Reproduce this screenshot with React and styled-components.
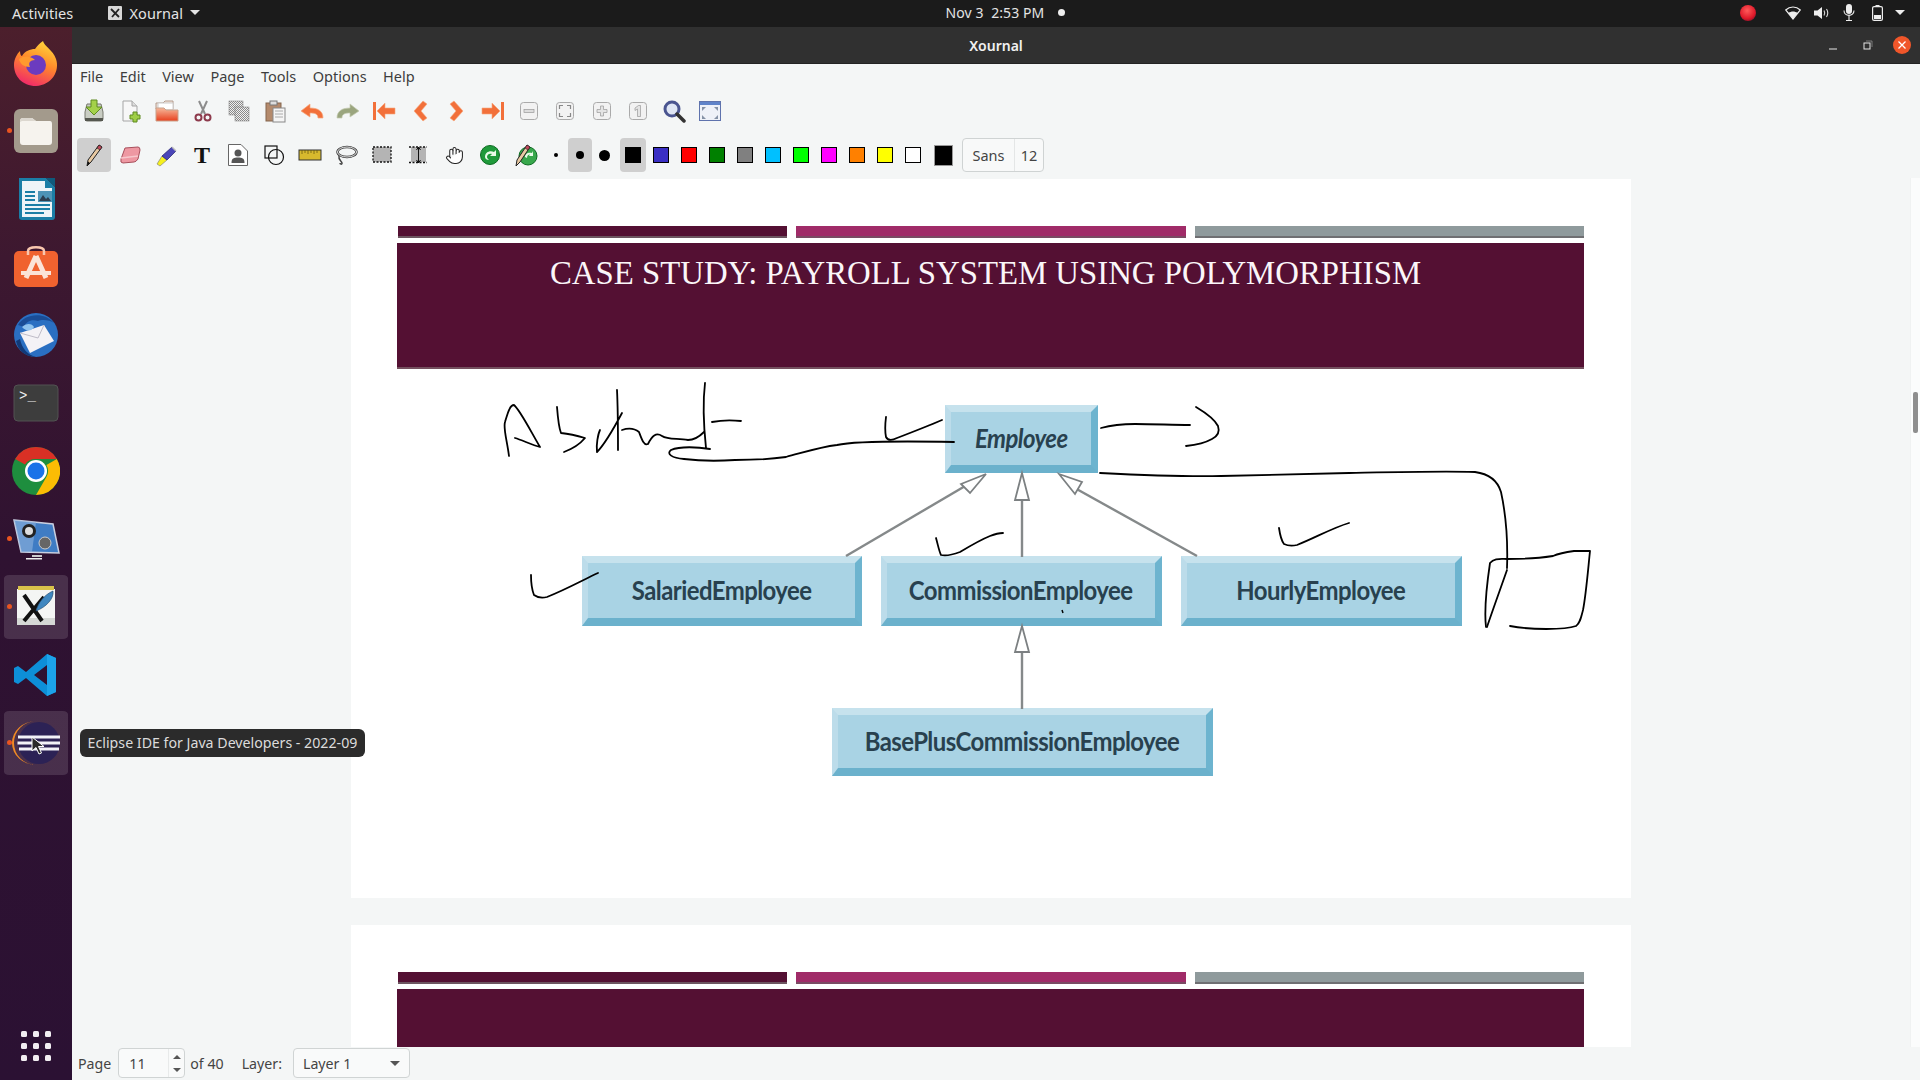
import React from 'react';
import styled, {createGlobalStyle} from 'styled-components';
import {Hand} from 'lucide-react';

const UI_FONT = `"Noto Sans", "Open Sans", sans-serif`;

const GlobalStyle = createGlobalStyle`
    html, body {
        margin: 0;
        padding: 0;
        width: 1920px;
        height: 1080px;
        overflow: hidden;
        background: #f4f6f6;
        font-family: ${UI_FONT};
    }
    * { box-sizing: border-box; }
    svg { display: block; }
`;

const Screen = styled.div`
    display: flex;
    flex-direction: column;
    width: 1920px;
    height: 1080px;
    position: relative;
`;

/* top gnome panel */
const Panel = styled.header`
    display: grid;
    grid-template-columns: 1fr auto 1fr;
    align-items: center;
    flex: 0 0 27px;
    padding-bottom: 2px;
    background: #1b1b1b;
    color: #e4e4e4;
    font-size: 14.5px;
    letter-spacing: 0.1px;
`;

const PanelLeft = styled.div`
    display: flex;
    align-items: center;
    padding-left: 12px;
`;

const AppMenu = styled.div`
    display: flex;
    align-items: center;
    gap: 7px;
    margin-left: 35px;
`;

const Clock = styled.div`
    display: flex;
    align-items: center;
    gap: 14px;
    padding-left: 91px;
    font-size: 14px;
    white-space: pre;
`;

const ClockDot = styled.span`
    width: 7px;
    height: 7px;
    border-radius: 50%;
    background: #eee;
`;

const PanelRight = styled.div`
    display: flex;
    align-items: center;
    justify-content: flex-end;
    padding-right: 12px;
`;

const Tray = styled.div`
    display: flex;
    align-items: center;
    justify-content: center;
    width: ${props => props.w}px;
`;

const Caret = styled.span`
    display: block;
    width: 0;
    height: 0;
    border-left: ${props => props.size}px solid transparent;
    border-right: ${props => props.size}px solid transparent;
    border-top: ${props => props.size}px solid ${props => props.color};
`;

const Body = styled.div`
    display: flex;
    flex: 1;
    min-height: 0;
`;

/* ubuntu dock */
const Dock = styled.nav`
    display: flex;
    flex-direction: column;
    flex: 0 0 72px;
    background: linear-gradient(180deg, #4c1f2c 0%, #3d1830 22%, #2f1231 50%, #2b1133 100%);
    padding-top: 2px;
`;

const DockItem = styled.div`
    position: relative;
    display: flex;
    align-items: center;
    justify-content: center;
    flex: 0 0 68px;
    margin: 0 4px;
    border-radius: 5px;
    background: ${props => (props.active ? 'rgba(255, 255, 255, 0.13)' : 'transparent')};
    height: 64px;
    border-top: 2px solid transparent;
    border-bottom: 2px solid transparent;
    background-clip: padding-box;
`;

const RunDot = styled.span`
    position: absolute;
    left: 3px;
    top: 50%;
    margin-top: -3px;
    width: 5px;
    height: 5px;
    border-radius: 50%;
    background: #e95420;
`;

const DockGrid = styled.div`
    display: grid;
    grid-template-columns: repeat(3, 6px);
    gap: 6px;
    justify-content: center;
    margin-top: auto;
    padding-bottom: 19px;
`;

const DockGridDot = styled.span`
    width: 6px;
    height: 6px;
    border-radius: 1.5px;
    background: #f2eef2;
`;

const Tooltip = styled.div`
    position: absolute;
    left: 80px;
    top: 729px;
    height: 28px;
    width: 285px;
    display: flex;
    align-items: center;
    justify-content: center;
    padding-bottom: 1px;
    background: #2b2b2b;
    color: #dcdcdc;
    border-radius: 6px;
    font-size: 14.2px;
    white-space: nowrap;
    z-index: 5;
`;

const Window = styled.main`
    display: flex;
    flex-direction: column;
    flex: 1;
    min-width: 0;
`;

const TitleBar = styled.div`
    display: grid;
    grid-template-columns: 1fr auto 1fr;
    align-items: center;
    flex: 0 0 37px;
    background: #303030;
    color: #f0f0f0;
    font-size: 14px;
    font-weight: 600;
    border-bottom: 1px solid #232323;
`;

const WindowTitle = styled.span`
    grid-column: 2;
`;

const WindowButtons = styled.div`
    grid-column: 3;
    display: flex;
    align-items: center;
    justify-content: flex-end;
    gap: 19px;
    padding-right: 9px;
`;

const WinButton = styled.span`
    display: flex;
    align-items: center;
    justify-content: center;
    width: ${props => (props.close ? 18 : 16)}px;
    height: 18px;
    margin-left: ${props => (props.close ? -2 : 0)}px;
    border-radius: 50%;
    background: ${props => (props.close ? '#f0562a' : 'transparent')};
`;

const MenuBar = styled.div`
    display: flex;
    align-items: center;
    gap: 16.5px;
    flex: 0 0 26px;
    padding: 0 0 2px 8px;
    background: #f4f6f6;
    color: #3d3d3d;
    font-size: 14.5px;
`;

const ToolRow = styled.div`
    display: flex;
    align-items: center;
    flex: 0 0 ${props => props.h}px;
    padding: 2px 0 0 4px;
    background: #f4f6f6;
`;

const Tool = styled.div`
    display: flex;
    align-items: center;
    justify-content: center;
    flex: 0 0 36.25px;
    height: 34px;
`;

const ActiveTool = styled(Tool)`
    flex: 0 0 34px;
    margin: 0 1px;
    border-radius: 4px;
    background: ${props => (props.active ? '#cfcfcf' : 'transparent')};
`;

const SerifT = styled.span`
    font-family: "Liberation Serif", serif;
    font-weight: 700;
    font-size: 24px;
    line-height: 1;
    color: #111;
`;

const DotTool = styled.div`
    display: flex;
    align-items: center;
    justify-content: center;
    flex: 0 0 24px;
    height: 34px;
    border-radius: 4px;
    background: ${props => (props.active ? '#cfcfcf' : 'transparent')};
`;

const Dot = styled.span`
    width: ${props => props.size}px;
    height: ${props => props.size}px;
    border-radius: 50%;
    background: #000;
`;

const SwatchTool = styled.div`
    display: flex;
    align-items: center;
    justify-content: center;
    flex: 0 0 ${props => (props.active ? 26 : 28)}px;
    height: 34px;
    margin: 0 ${props => (props.active ? 1 : 0)}px 0 ${props => (props.active ? 4 : 0)}px;
    border-radius: 4px;
    background: ${props => (props.active ? '#cfcfcf' : 'transparent')};
`;

const Swatch = styled.span`
    width: 16px;
    height: 16px;
    border: 1px solid #000;
    background: ${props => props.color};
`;

const BigSwatch = styled.span`
    width: 19px;
    height: 21px;
    margin-left: 7px;
    margin-right: 9px;
    background: #000;
    border: 1px solid #999;
`;

const FontButton = styled.div`
    display: flex;
    align-items: center;
    width: 82px;
    height: 34px;
    border: 1px solid #cfd3d3;
    border-radius: 4px;
    background: #f8f9f9;
    color: #444;
    font-size: 14.5px;
`;

const FontName = styled.span`
    flex: 0 0 52px;
    text-align: center;
    border-right: 1px solid #e4e6e6;
    line-height: 32px;
`;

const FontSize = styled.span`
    flex: 1;
    text-align: center;
`;

/* document canvas */
const CanvasRow = styled.div`
    display: flex;
    flex: 1;
    min-height: 0;
    background: #f4f6f6;
`;

const Canvas = styled.div`
    display: flex;
    flex-direction: column;
    align-items: center;
    gap: 27px;
    flex: 1;
    padding-top: 1px;
    overflow: hidden;
`;

const ScrollStrip = styled.div`
    flex: 0 0 10px;
    background: #fbfcfc;
    border-left: 1px solid #f0f2f2;
    padding: 214px 0 0 2px;
`;

const ScrollThumb = styled.div`
    width: 5px;
    height: 41px;
    background: #8e8e8e;
    border-radius: 2px;
`;

const Page = styled.section`
    position: relative;
    flex: 0 0 719px;
    width: 1280px;
    background: #fff;
    padding: 47px 47px 0 46px;
`;

const Stripes = styled.div`
    display: flex;
    gap: 9px;
    padding-left: 1px;
`;

const Stripe = styled.div`
    flex: 1;
    height: 12px;
    background: ${props => props.color};
    border-bottom: 2px solid ${props => props.edge};
`;

const SlideHeader = styled.div`
    height: 126px;
    margin-top: 5px;
    padding: 4px 10px 0 0;
    background: #541033;
    border-bottom: 2px solid #75505f;
    color: #fbf6f9;
    font-family: "Liberation Serif", serif;
    font-size: 32.8px;
    line-height: 52px;
    text-align: center;
`;

const Node = styled.div`
    position: absolute;
    left: ${props => props.x}px;
    top: ${props => props.y}px;
    width: ${props => props.w}px;
    height: ${props => props.h}px;
    display: flex;
    align-items: center;
    justify-content: center;
    padding-bottom: 1px;
    background: #a9d3e4;
    border-style: solid;
    border-width: 7px 7px 8px 6px;
    border-color: #c6e2ed #6db4cf #6bb1cc #bcdcea;
    color: #28414f;
    font-family: Lato, "Liberation Sans", sans-serif;
    font-weight: 700;
    font-style: ${props => (props.italic ? 'italic' : 'normal')};
    font-size: 26px;
    letter-spacing: -0.6px;
    white-space: nowrap;
`;

const NodeLabel = styled.span`
    display: block;
    transform: scaleX(0.92);
`;

const Ink = styled.svg`
    position: absolute;
    left: 0;
    top: 0;
    width: 1280px;
    height: 719px;
    overflow: visible;
    pointer-events: none;
`;

const StatusBar = styled.footer`
    display: flex;
    align-items: center;
    flex: 0 0 33px;
    padding: 0 0 1px 6px;
    background: #f4f6f6;
    color: #444;
    font-size: 14.2px;
`;

const SpinBox = styled.div`
    display: flex;
    align-items: center;
    width: 67px;
    height: 30px;
    margin: 0 5px 0 7px;
    border: 1px solid #d0d4d4;
    border-radius: 4px;
    background: #f9fafa;
    padding-left: 10px;
`;

const SpinValue = styled.span`
    flex: 1;
`;

const SpinArrows = styled.div`
    display: flex;
    flex-direction: column;
    align-items: center;
    justify-content: center;
    gap: 9px;
    width: 16px;
    height: 100%;
    border-left: 1px solid #e8eaea;
`;

const ArrowUp = styled.span`
    width: 0;
    height: 0;
    border-left: 4px solid transparent;
    border-right: 4px solid transparent;
    border-bottom: 4px solid #555;
`;

const LayerLabel = styled.span`
    margin: 0 11px 0 18px;
`;

const LayerSelect = styled.div`
    display: flex;
    align-items: center;
    justify-content: space-between;
    width: 117px;
    height: 30px;
    padding: 0 9px;
    border: 1px solid #d0d4d4;
    border-radius: 4px;
    background: #f9fafa;
`;

const PointerMark = styled.svg`
    position: absolute;
    left: 27px;
    top: 25px;
`;

/* --- small drawings --- */

const S = ({children, size = 24, box = 24}) => (
    <svg width={size} height={size} viewBox={`0 0 ${box} ${box}`}>{children}</svg>
);

const Checker = () => (
    <pattern id="chk" width="2" height="2" patternUnits="userSpaceOnUse">
        <rect width="2" height="2" fill="#f0f0f0"/>
        <rect width="1" height="1" fill="#8a8a8a"/>
        <rect x="1" y="1" width="1" height="1" fill="#8a8a8a"/>
    </pattern>
);

const toolbarIcons = {
    save: <S><path d="M3 13 L5 5 H19 L21 13 V20 Q21 22 19 22 H5 Q3 22 3 20Z" fill="#c9cdc3" stroke="#77796f"/><rect x="3" y="19" width="18" height="3" fill="#55574f"/><path d="M9 1 H15 V8 H20 L12 16 L4 8 H9Z" fill="#a4d14a" stroke="#5f8a20"/></S>,
    file: <S><path d="M5 2 H14 L19 7 V22 H5Z" fill="#f7f7f7" stroke="#a5a5a5"/><path d="M14 2 V7 H19" fill="#ddd" stroke="#a5a5a5"/><path d="M15 13 H19 V16 H22 V20 H19 V23 H15 V20 H12 V16 H15Z" fill="#9fce45" stroke="#5f8a20"/></S>,
    open: <S><defs><linearGradient id="folder" x1="0" y1="0" x2="0" y2="1"><stop offset="0" stopColor="#f6b89a"/><stop offset="1" stopColor="#e8401e"/></linearGradient></defs><path d="M1 4 H8 L10 2 H18 V10 H1Z" fill="#f2e6dc" stroke="#b39a8c"/><rect x="3" y="4" width="15" height="7" fill="#fff" stroke="#ccc"/><path d="M1 9 H9 L11 11 H23 V22 H1Z" fill="url(#folder)" stroke="#c9a18a"/></S>,
    cut: <S><path d="M8 2 L14 15 M16 2 L10 15" stroke="#8c8c8c" strokeWidth="2"/><circle cx="7.5" cy="18.5" r="3" fill="none" stroke="#8d3a4c" strokeWidth="2"/><circle cx="16.5" cy="18.5" r="3" fill="none" stroke="#8d3a4c" strokeWidth="2"/></S>,
    copy: <S><defs><Checker/></defs><rect x="2" y="2" width="14" height="14" fill="url(#chk)" stroke="#777" strokeWidth=".5"/><rect x="8" y="8" width="14" height="14" fill="url(#chk)" stroke="#777" strokeWidth=".5"/></S>,
    paste: <S><rect x="3" y="4" width="15" height="18" fill="#b48a6c" stroke="#83644c"/><rect x="7" y="2" width="7" height="4" fill="#ddd" stroke="#777"/><rect x="10" y="9" width="12" height="14" fill="#f5f5f5" stroke="#888"/><path d="M12 12 H20 M12 15 H20 M12 18 H20" stroke="#aaa"/></S>,
    undo: <S><path d="M1 12 L10 5 V9 C18 9 23 12 23 19 L18 19 C18 15 15 14 10 14 V18Z" fill="#f2703a" stroke="#f7a77c" strokeWidth=".7" strokeLinejoin="round"/></S>,
    redo: <S><path d="M23 12 L14 5 V9 C6 9 1 12 1 19 L6 19 C6 15 9 14 14 14 V18Z" fill="#9aa57e" stroke="#c3cab0" strokeWidth=".7" strokeLinejoin="round"/></S>,
    first: <S><rect x="1" y="3" width="3" height="18" fill="#f2703a"/><path d="M5 12 L13 4 V9 H23 V15 H13 V20Z" fill="#f2703a" stroke="#f7a77c" strokeWidth=".6"/></S>,
    prev: <S><path d="M15 2 L6 12 L15 22 L19 19 L13 12 L19 5Z" fill="#f2703a" stroke="#f7a77c" strokeWidth=".6" strokeLinejoin="round"/></S>,
    next: <S><path d="M9 2 L18 12 L9 22 L5 19 L11 12 L5 5Z" fill="#f2703a" stroke="#f7a77c" strokeWidth=".6" strokeLinejoin="round"/></S>,
    last: <S><rect x="20" y="3" width="3" height="18" fill="#f2703a"/><path d="M19 12 L11 4 V9 H1 V15 H11 V20Z" fill="#f2703a" stroke="#f7a77c" strokeWidth=".6"/></S>,
    zoomOut: <S box={20} size={20}><rect x="1.5" y="1.5" width="17" height="17" rx="3" fill="#f2f2f2" stroke="#aaa"/><rect x="5" y="8.5" width="10" height="3" fill="#ddd" stroke="#999" strokeWidth=".7"/></S>,
    zoomFit: <S box={20} size={20}><rect x="1.5" y="1.5" width="17" height="17" rx="3" fill="#f2f2f2" stroke="#aaa"/><path d="M4.5 8 V4.5 H8 M12 4.5 H15.5 V8 M15.5 12 V15.5 H12 M8 15.5 H4.5 V12" fill="none" stroke="#888" strokeWidth="1.2"/></S>,
    zoomIn: <S box={20} size={20}><rect x="1.5" y="1.5" width="17" height="17" rx="3" fill="#f2f2f2" stroke="#aaa"/><path d="M8.5 5 H11.5 V8.5 H15 V11.5 H11.5 V15 H8.5 V11.5 H5 V8.5 H8.5Z" fill="#e4e4e4" stroke="#999" strokeWidth=".7"/></S>,
    zoomOne: <S box={20} size={20}><rect x="1.5" y="1.5" width="17" height="17" rx="3" fill="#f2f2f2" stroke="#aaa"/><path d="M7 7 L10.5 4.5 H12.5 V15.5 H9.5 V8 L7 9.5Z" fill="#e4e4e4" stroke="#999" strokeWidth=".7"/></S>,
    find: <S><circle cx="10" cy="10" r="7" fill="#dfe6f5" stroke="#4a5590" strokeWidth="3"/><path d="M15 15 L22 22" stroke="#333" strokeWidth="3.5" strokeLinecap="round"/></S>,
    fullscreen: <S><rect x="1.5" y="2.5" width="21" height="19" fill="#eef1f8" stroke="#5f73ad"/><rect x="2" y="3" width="20" height="3" fill="#5f83c9"/><path d="M4 8 L8 8 L4 12Z M20 8 L16 8 L20 12Z M4 20 L8 20 L4 16Z M20 20 L16 20 L20 16Z" fill="#8592a6"/></S>,
    pen: <S><path d="M17 2 L20 4 L9 19 L5 23 L6 17Z" fill="#e8c9a2" stroke="#222" strokeLinejoin="round"/><path d="M17 2 L20 4 L18 7 L15 5Z" fill="#c0485a" stroke="#222" strokeWidth=".7"/><path d="M5 23 L6 18.5 L8 20Z" fill="#111"/></S>,
    eraser: <S><path d="M7 5 L20 4 Q22 4 22 7 L20 16 Q18 19 16 19 L5 20 Q2 20 3 16Z" fill="#ee98a2" stroke="#a8505c"/><path d="M3 15 L20 13" stroke="#f7c7cc" strokeWidth="1.5"/></S>,
    highlighter: <S><path d="M3 21 L8 13 L13 17 L6 23Z" fill="#f6f01e" stroke="#777" strokeWidth=".6"/><path d="M8 13 L18 4 L22 8 L13 17Z" fill="#4a46b8" stroke="#23206b" strokeWidth=".7"/><path d="M18 4 L22 8" stroke="#bbb" strokeWidth="1.5"/></S>,
    image: <S box={24}><path d="M2.5 1.5 H15 L21.5 8 V22.5 H2.5Z" fill="#fff" stroke="#666" strokeLinejoin="round"/><circle cx="12" cy="10" r="3.5" fill="#555"/><path d="M5.5 20 C5.5 15 8 14.5 12 14.5 C16 14.5 18.5 15 18.5 20Z" fill="#555"/></S>,
    shapes: <S><rect x="3" y="3" width="12" height="12" fill="none" stroke="#111" strokeWidth="1.2"/><circle cx="14" cy="14" r="7.5" fill="none" stroke="#111" strokeWidth="1.2"/></S>,
    ruler: <S><rect x="1" y="7" width="22" height="10" fill="#d7b92d" stroke="#333"/><path d="M4 7 V11 M7 7 V10 M10 7 V11 M13 7 V10 M16 7 V11 M19 7 V10" stroke="#6b5a10" strokeWidth=".8"/></S>,
    lasso: <S><ellipse cx="13" cy="9" rx="9.5" ry="5" fill="none" stroke="#333" strokeWidth="2.4"/><ellipse cx="13" cy="9" rx="9.5" ry="5" fill="none" stroke="#eee" strokeWidth="1"/><path d="M5 13 C4 17 8 18 8 20 C8 22 6 21 6 20" fill="none" stroke="#444" strokeWidth="1.5"/></S>,
    rect: <S><rect x="3" y="4" width="18" height="15" fill="#b4b4b4" stroke="#111" strokeWidth="1.3" strokeDasharray="2 1.5"/></S>,
    vspace: <S><rect x="5" y="4" width="15" height="15" fill="#b4b4b4"/><path d="M3 4 H21 M3 19.5 H21" stroke="#111" strokeWidth="1.3" strokeDasharray="2 1.5"/><path d="M12.5 4 V20 M10.5 7 L12.5 4 L14.5 7 M10.5 17 L12.5 20 L14.5 17" fill="none" stroke="#111"/></S>,
    hand: <Hand size={19} color="#222" strokeWidth={1.3} fill="#fff"/>,
    defaults: <S><circle cx="12" cy="12" r="9.5" fill="#1f9a3a" stroke="#0d6b22"/><path d="M7 14 C7 9 12 7 16 9 L18 7 V13 H12 L14 11 C12 10 9 11 9 14 C9 15 10 16 11 17 C9 17 7 16 7 14Z" fill="#eafbe8"/></S>,
    defaultPen: <S><circle cx="14" cy="13" r="9" fill="#38a84c" stroke="#0d6b22"/><path d="M11 14 C11 10 15 9 18 10 L19 8 V13 H15 L16 11.5 C14 11.5 13 13 13 15Z" fill="#eafbe8"/><path d="M13 2 L16 4 L6 19 L2 23 L3 17Z" fill="#e8c9a2" stroke="#222" strokeLinejoin="round"/><path d="M13 2 L16 4 L14 7 L11 5Z" fill="#c0485a" stroke="#222" strokeWidth=".6"/></S>,
};

const firstRow = ['save', 'file', 'open', 'cut', 'copy', 'paste', 'undo', 'redo', 'first', 'prev', 'next', 'last', 'zoomOut', 'zoomFit', 'zoomIn', 'zoomOne', 'find', 'fullscreen'];
const secondRow = ['pen', 'eraser', 'highlighter', 'text', 'image', 'shapes', 'ruler', 'lasso', 'rect', 'vspace', 'hand', 'defaults', 'defaultPen'];
const swatches = ['#000000', '#3a2fc4', '#ff0000', '#008000', '#808080', '#00c0ff', '#00ff00', '#ff00ff', '#ff8000', '#ffff00', '#ffffff'];
const menus = ['File', 'Edit', 'View', 'Page', 'Tools', 'Options', 'Help'];

const dockIcons = [
    {
        key: 'firefox',
        icon: (
            <S size={48} box={48}>
                <defs>
                    <linearGradient id="ff" x1="0.7" y1="0" x2="0.3" y2="1">
                        <stop offset="0" stopColor="#ffd53a"/>
                        <stop offset=".45" stopColor="#ff8a2b"/>
                        <stop offset="1" stopColor="#f0266b"/>
                    </linearGradient>
                </defs>
                <path d="M31 2 C32 7 41 11 44 20 C48 32 40 46 24 47 C10 47 2 37 2 26 C2 20 5 15 8 12 C8 15 9 17 10 17 C13 12 18 10 23 10 C25 7 27 5 31 2Z" fill="url(#ff)"/>
                <circle cx="24" cy="26" r="10" fill="#6b3bbf"/>
                <path d="M7 20 C12 16 19 17 23 21 C18 21 16 24 18 28 C12 28 8 25 7 20Z" fill="#ff9a2e"/>
            </S>
        ),
    },
    {
        key: 'files',
        dot: true,
        icon: (
            <S size={48} box={48}>
                <rect x="2" y="2" width="44" height="44" rx="6" fill="#a39a8c"/>
                <path d="M8 14 Q8 11 11 11 H20 L24 14 H38 Q40 14 40 17 V35 Q40 38 37 38 H11 Q8 38 8 35Z" fill="#f6f3ee"/>
                <path d="M8 15 Q8 11 11 11 H20 L24 14 H10Z" fill="#dcd7cf"/>
            </S>
        ),
    },
    {
        key: 'writer',
        icon: (
            <S size={48} box={48}>
                <path d="M7 3 H34 L43 12 V42 Q43 45 40 45 H10 Q7 45 7 42Z" fill="#1b7ea6"/>
                <path d="M10 6 H33 V13 H40 V42 H10Z" fill="#eef4f8"/>
                <path d="M34 3 H43 V12Z" fill="#0f5a7c"/>
                <rect x="26" y="16" width="14" height="11" fill="#4d93b6"/>
                <path d="M27 26 L31 20 L34 24 L36 22 L39 26Z" fill="#2c3e50"/>
                <path d="M13 17 H23 M13 21 H23 M13 25 H23 M13 30 H38 M13 34 H38 M13 38 H32" stroke="#1b7ea6" strokeWidth="2"/>
            </S>
        ),
    },
    {
        key: 'store',
        icon: (
            <S size={48} box={48}>
                <rect x="2" y="8" width="44" height="36" rx="5" fill="#f0622f"/>
                <path d="M16 12 V8 C16 3 32 3 32 8 V12" fill="none" stroke="#f8c6ae" strokeWidth="2.5"/>
                <path d="M24 13 L14 35 M24 13 L34 35" stroke="#fbe3d7" strokeWidth="5" fill="none"/>
                <rect x="9" y="28" width="30" height="4" fill="#fbe3d7"/>
            </S>
        ),
    },
    {
        key: 'thunderbird',
        icon: (
            <S size={48} box={48}>
                <circle cx="24" cy="24" r="22" fill="#2a6fc2"/>
                <path d="M6 14 C12 3 32 0 42 12 C38 9 30 8 26 10 C20 8 14 10 12 16Z" fill="#1a4d96"/>
                <path d="M8 22 L32 14 L42 30 L18 42Z" fill="#f4f2f6"/>
                <path d="M8 22 L26 27 L32 14" fill="none" stroke="#bfbcc8"/>
                <path d="M10 16 C14 12 20 12 22 16 C20 20 14 21 10 16Z" fill="#8fc3ee"/>
                <path d="M4 30 C6 40 14 46 24 46 C16 44 10 38 8 28Z" fill="#123a78"/>
            </S>
        ),
    },
    {
        key: 'terminal',
        icon: (
            <S size={48} box={48}>
                <rect x="2" y="6" width="44" height="36" rx="4" fill="#3d3d3d" stroke="#525252"/>
                <text x="7" y="21" fill="#f0f0f0" fontFamily="Liberation Mono, monospace" fontSize="14">&gt;_</text>
            </S>
        ),
    },
    {
        key: 'chrome',
        icon: (
            <S size={48} box={48}>
                <circle cx="24" cy="24" r="24" fill="#1e8e3e"/>
                <path d="M24 0 A24 24 0 0 1 44.8 12 H24 A12 12 0 0 0 13 17.5 L3.2 12 A24 24 0 0 1 24 0Z" fill="#d93025"/>
                <path d="M44.8 12 A24 24 0 0 1 24 48 L34.4 30 A12 12 0 0 0 34.4 18Z" fill="#fbbc04"/>
                <circle cx="24" cy="24" r="11" fill="#fff"/>
                <circle cx="24" cy="24" r="8.5" fill="#1a73e8"/>
            </S>
        ),
    },
    {
        key: 'video',
        dot: true,
        icon: (
            <S size={48} box={48}>
                <path d="M2 5 L41 9 L47 38 L9 37Z" fill="#3f7cc4" stroke="#c9cfe0" strokeWidth="1.5"/>
                <path d="M2 5 L24 7 L20 37 L9 37Z" fill="#8fb4de" opacity=".6"/>
                <circle cx="17" cy="16" r="7" fill="#222"/>
                <circle cx="17" cy="16" r="4" fill="#ddd"/>
                <circle cx="33" cy="28" r="6" fill="#666" stroke="#ccc"/>
                <rect x="20" y="40" width="10" height="2" fill="#ccc"/>
                <rect x="14" y="43" width="16" height="1.5" fill="#eee"/>
            </S>
        ),
    },
    {
        key: 'xournal',
        dot: true,
        active: true,
        icon: (
            <S size={48} box={48}>
                <rect x="5" y="6" width="38" height="36" fill="#f4f5f4"/>
                <rect x="5" y="35" width="38" height="7" fill="#d5d8d5"/>
                <rect x="6" y="3" width="36" height="4" fill="#d8c24a"/>
                <path d="M12 12 L30 38 M32 14 L12 38" stroke="#111" strokeWidth="4"/>
                <path d="M41 8 C42 16 34 24 24 28 C26 20 32 12 41 8Z" fill="#3f87c0" stroke="#234d74" strokeWidth=".7"/>
            </S>
        ),
    },
    {
        key: 'vscode',
        icon: (
            <S size={48} box={48}>
                <path d="M35 3 L44 7 V41 L35 45 L14 27 L6 33 L2 31 V17 L6 15 L14 21Z M35 14 L22 24 L35 34Z" fill="#0d8fd8" fillRule="evenodd"/>
                <path d="M35 3 L44 7 V41 L35 45Z" fill="#1ca3ea"/>
            </S>
        ),
    },
    {
        key: 'eclipse',
        dot: true,
        active: true,
        icon: (
            <S size={48} box={48}>
                <path d="M24 2 A22 22 0 1 0 24 46 A24 22 0 0 1 24 2Z" fill="#f08a24"/>
                <ellipse cx="27" cy="24" rx="21" ry="21" fill="#2c2255"/>
                <path d="M6 18 H48 M5.5 24 H48 M7 30 H47" stroke="#f2f2f8" strokeWidth="3"/>
            </S>
        ),
    },
];

const pointer = (
    <PointerMark width="16" height="20" viewBox="0 0 16 20">
        <path d="M1 1 L1 15 L5 11.5 L8 18 L10.5 17 L7.5 10.5 L13 10.5Z" fill="#2a2a2a" stroke="#fff" strokeWidth="1"/>
    </PointerMark>
);

/* ink strokes and diagram arrows use page coords of the 1920 screen, viewBox shifts them */
const inkPaths = [
    'M509 456 C507 440 503 428 505 422 C508 412 510 405 514 405 C520 410 530 430 540 447 C532 445 522 440 515 438',
    'M557 407 C558 420 559 428 561 433 C570 434 578 436 585 438 C580 444 572 449 564 452',
    'M617 390 C618 410 618 430 618 450 M622 413 C614 428 605 444 597 452 C596 445 598 434 600 430',
    'M622 430 C628 428 634 428 639 432 C642 440 644 446 648 444 C652 436 656 432 662 436 C668 440 678 438 688 440 C694 440 700 436 704 432',
    'M705 383 C703 400 703 420 706 448',
    'M712 422 C722 420 732 420 741 421',
    'M710 449 C698 447 680 446 671 450 C666 454 672 458 684 459 C700 461 720 461 735 460 C755 460 772 459 786 457 C805 452 820 447 837 445 C855 441 900 441 954 442',
    'M886 417 C885 425 885 432 886 437 C888 441 893 440 897 438 C910 433 928 426 942 420',
    'M936 538 C938 545 939 551 941 555 C945 556 952 555 960 552 C970 546 980 540 990 536 C995 534 1000 533 1003 533',
    'M531 575 C531 583 532 590 534 595 C538 598 543 598 547 597 C565 590 583 580 598 573',
    'M1279 528 C1280 535 1281 540 1284 544 C1288 546 1293 546 1297 545 C1315 538 1332 528 1349 523',
    'M1101 428 C1112 425 1125 424 1135 424 C1155 424 1172 425 1190 425',
    'M1196 407 C1206 413 1215 420 1218 426 C1220 432 1218 436 1212 439 C1205 443 1195 445 1186 446',
    'M1100 473 C1140 475 1180 477 1221 476 C1260 475 1300 474 1349 473 C1400 472 1440 471 1475 472 C1490 474 1498 482 1501 492 C1506 515 1508 540 1507 568',
    'M1507 570 C1500 590 1492 612 1487 627',
    'M1486 627 C1484 610 1486 590 1490 563 C1494 558 1500 559 1507 559 C1525 559 1540 558 1553 556 C1560 553 1567 552 1574 551 L1590 551 C1588 570 1586 595 1583 610 C1581 618 1580 623 1576 626 C1565 630 1530 630 1510 626',
];

const arrowLines = ['M846 556 L972 482', 'M1022 557 L1022 500', 'M1197 556 L1073 487', 'M1022 709 L1022 652'];
const arrowHeads = ['986,474 961,484 970,493', '1022,473 1015,500 1029,500', '1059,474 1082,482 1075,494', '1022,626 1015,652 1029,652'];

const nodes = [
    {label: 'Employee', x: 594, y: 226, w: 153, h: 68, italic: true},
    {label: 'SalariedEmployee', x: 231, y: 377, w: 280, h: 70},
    {label: 'CommissionEmployee', x: 530, y: 377, w: 281, h: 70},
    {label: 'HourlyEmployee', x: 830, y: 377, w: 281, h: 70},
    {label: 'BasePlusCommissionEmployee', x: 481, y: 529, w: 381, h: 68},
];

const Slide = ({withDiagram}) => (
    <Page>
        <Stripes>
            <Stripe color="#541033" edge="#6d5560"/>
            <Stripe color="#a02b68" edge="#7a4a63"/>
            <Stripe color="#8f9a9c" edge="#6f6f72"/>
        </Stripes>
        <SlideHeader>{withDiagram ? 'CASE STUDY: PAYROLL SYSTEM USING POLYMORPHISM' : ''}</SlideHeader>
        {withDiagram && nodes.map(n => (
            <Node key={n.label} x={n.x} y={n.y} w={n.w} h={n.h} italic={n.italic}>
                <NodeLabel>{n.label}</NodeLabel>
            </Node>
        ))}
        {withDiagram && (
            <Ink viewBox="351 179 1280 719">
                {arrowLines.map(d => <path key={d} d={d} stroke="#85898a" strokeWidth="2.4" fill="none"/>)}
                {arrowHeads.map(p => <polygon key={p} points={p} fill="#fff" stroke="#7c8082" strokeWidth="1.8"/>)}
                {inkPaths.map(d => (
                    <path key={d} d={d} stroke="#000" strokeWidth="1.8" fill="none" strokeLinecap="round" strokeLinejoin="round"/>
                ))}
                <path d="M1062 610 L1063 613" stroke="#000" strokeWidth="1.5"/>
            </Ink>
        )}
    </Page>
);

const App = () => (
    <Screen>
        <GlobalStyle/>
        <Panel>
            <PanelLeft>
                Activities
                <AppMenu>
                    <S size={14} box={14}>
                        <rect width="14" height="14" rx="1" fill="#d8d8d8"/>
                        <path d="M3 3 L11 11 M11 3 L4 11" stroke="#222" strokeWidth="1.8"/>
                    </S>
                    Xournal
                    <Caret size={5} color="#e4e4e4"/>
                </AppMenu>
            </PanelLeft>
            <Clock>
                {'Nov 3  2:53 PM'}
                <ClockDot/>
            </Clock>
            <PanelRight>
                <Tray w={28}>
                    <svg width="16" height="16" viewBox="0 0 16 16">
                        <defs>
                            <radialGradient id="rec" cx="0.45" cy="0.35" r="0.7">
                                <stop offset="0" stopColor="#ff5a5a"/>
                                <stop offset=".7" stopColor="#e01a2a"/>
                                <stop offset="1" stopColor="#90102a"/>
                            </radialGradient>
                        </defs>
                        <circle cx="8" cy="8" r="8" fill="url(#rec)"/>
                    </svg>
                </Tray>
                <Tray w={16}/>
                <Tray w={30}>
                    <svg width="16" height="14" viewBox="0 0 16 14">
                        <path d="M0.7 4 C5 0 11 0 15.3 4 L8 13Z" fill="none" stroke="#eee" strokeWidth="1.2"/>
                        <path d="M3.5 7 C6 5 10 5 12.5 7 L8 13Z" fill="#eee"/>
                    </svg>
                </Tray>
                <Tray w={27}>
                    <svg width="16" height="14" viewBox="0 0 16 14">
                        <path d="M0 4.5 H3.5 L8 1 V13 L3.5 9.5 H0Z" fill="#eee"/>
                        <path d="M10 4.5 Q11.5 7 10 9.5 M12.5 3 Q15 7 12.5 11" stroke="#ddd" fill="none" strokeWidth="1.1"/>
                    </svg>
                </Tray>
                <Tray w={27}>
                    <svg width="12" height="17" viewBox="0 0 12 17">
                        <rect x="3" y="0" width="6" height="10" rx="3" fill="#eee"/>
                        <path d="M1 6.5 C1 13 11 13 11 6.5 M6 12 V16 M3 16.5 H9" stroke="#eee" fill="none" strokeWidth="1.1"/>
                    </svg>
                </Tray>
                <Tray w={30}>
                    <svg width="11" height="16" viewBox="0 0 11 16">
                        <rect x="3.5" y="0" width="4" height="2" fill="#eee"/>
                        <rect x="0.6" y="1.6" width="9.8" height="13.8" rx="1.5" fill="none" stroke="#eee" strokeWidth="1.2"/>
                        <rect x="2" y="10" width="7" height="4" fill="#eee"/>
                    </svg>
                </Tray>
                <Tray w={16}><Caret size={5} color="#eee"/></Tray>
            </PanelRight>
        </Panel>
        <Body>
            <Dock>
                {dockIcons.map(d => (
                    <DockItem key={d.key} active={d.active}>
                        {d.dot && <RunDot/>}
                        {d.icon}
                        {d.key === 'eclipse' && pointer}
                    </DockItem>
                ))}
                <DockGrid>
                    {Array.from({length: 9}, (_, i) => <DockGridDot key={i}/>)}
                </DockGrid>
            </Dock>
            <Window>
                <TitleBar>
                    <WindowTitle>Xournal</WindowTitle>
                    <WindowButtons>
                        <WinButton>
                            <svg width="10" height="10" viewBox="0 0 10 10"><path d="M1 9 H9" stroke="#e6e6e6" strokeWidth="1"/></svg>
                        </WinButton>
                        <WinButton>
                            <svg width="10" height="10" viewBox="0 0 10 10">
                                <rect x="1" y="3" width="6" height="6" fill="none" stroke="#e6e6e6"/>
                                <path d="M3 1 H9 V7" fill="none" stroke="#999" strokeWidth=".7"/>
                            </svg>
                        </WinButton>
                        <WinButton close>
                            <svg width="10" height="10" viewBox="0 0 10 10">
                                <path d="M1.5 1.5 L8.5 8.5 M8.5 1.5 L1.5 8.5" stroke="#fff" strokeWidth="1.3"/>
                            </svg>
                        </WinButton>
                    </WindowButtons>
                </TitleBar>
                <MenuBar>
                    {menus.map(m => <span key={m}>{m}</span>)}
                </MenuBar>
                <ToolRow h={40}>
                    {firstRow.map(name => <Tool key={name}>{toolbarIcons[name]}</Tool>)}
                </ToolRow>
                <ToolRow h={48}>
                    {secondRow.map((name, i) => (
                        <ActiveTool key={name} active={i === 0}>
                            {name === 'text' ? <SerifT>T</SerifT> : toolbarIcons[name]}
                        </ActiveTool>
                    ))}
                    <DotTool><Dot size={4}/></DotTool>
                    <DotTool active><Dot size={8}/></DotTool>
                    <DotTool><Dot size={11}/></DotTool>
                    {swatches.map((c, i) => (
                        <SwatchTool key={c} active={i === 0} color={c}>
                            <Swatch color={c}/>
                        </SwatchTool>
                    ))}
                    <BigSwatch/>
                    <FontButton>
                        <FontName>Sans</FontName>
                        <FontSize>12</FontSize>
                    </FontButton>
                </ToolRow>
                <CanvasRow>
                    <Canvas>
                        <Slide withDiagram/>
                        <Slide/>
                    </Canvas>
                    <ScrollStrip><ScrollThumb/></ScrollStrip>
                </CanvasRow>
                <StatusBar>
                    Page
                    <SpinBox>
                        <SpinValue>11</SpinValue>
                        <SpinArrows>
                            <ArrowUp/>
                            <Caret size={4} color="#555"/>
                        </SpinArrows>
                    </SpinBox>
                    of 40
                    <LayerLabel>Layer:</LayerLabel>
                    <LayerSelect>
                        Layer 1
                        <Caret size={5} color="#555"/>
                    </LayerSelect>
                </StatusBar>
            </Window>
        </Body>
        <Tooltip>Eclipse IDE for Java Developers - 2022-09</Tooltip>
    </Screen>
);

export default App;
